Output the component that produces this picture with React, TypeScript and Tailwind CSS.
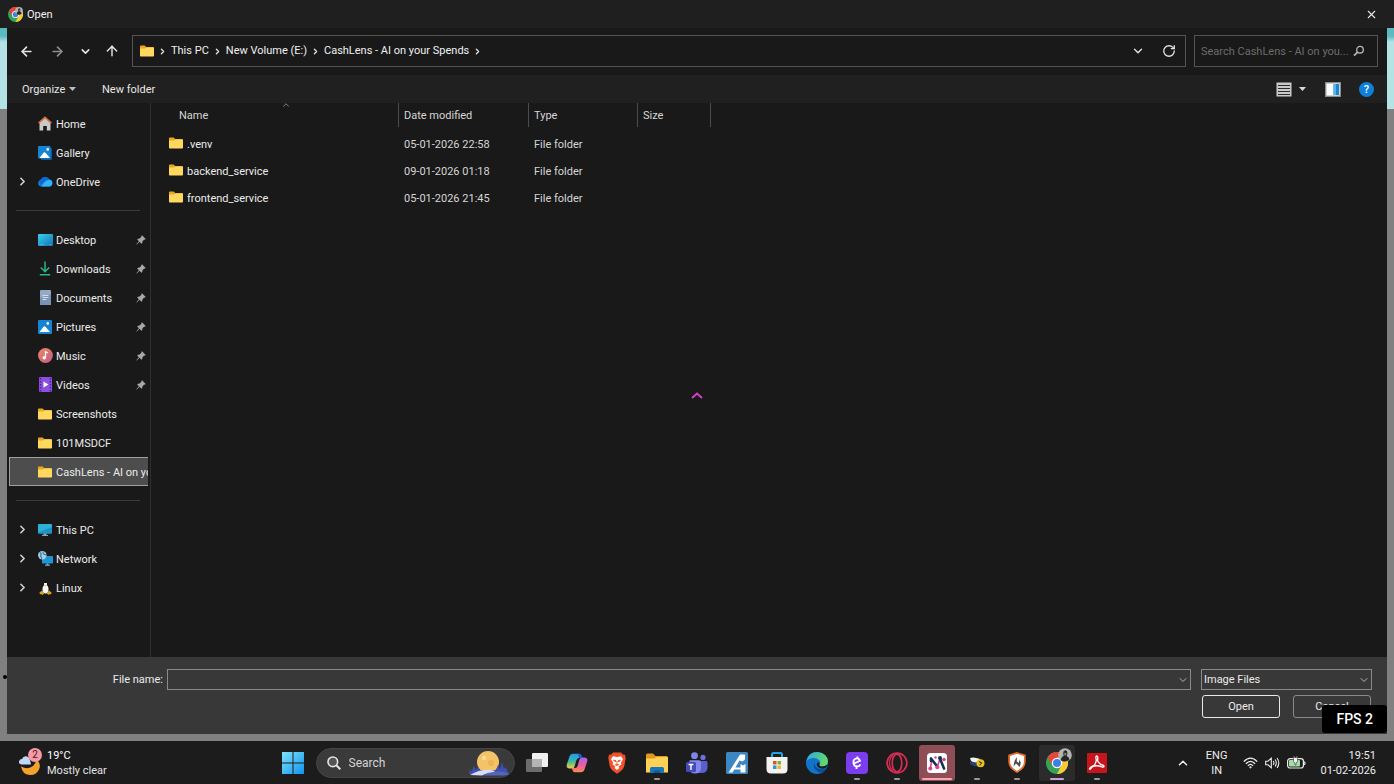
import type { ReactNode } from 'react';
import clsx from 'clsx';
import { ArrowLeft, ArrowRight, ArrowUp, ChevronDown, ChevronRight, ChevronUp, RotateCw, X } from 'lucide-react';

function FolderIcon() {
  return (
    <svg width="14" height="12" viewBox="0 0 14 12">
      <path d="M0 1.2Q0 .5.8.5H4.600L6.200 2H13q1 0 1 1V5H0Z" fill="#e9a820" />
      <path d="M0 3.600H5L6.600 2.600H13.200q.8 0 .8.8V10.700q0 .8-.8.8H.8Q0 11.500 0 10.700Z" fill="#ffd95f" />
    </svg>
  );
}

function HomeIcon() {
  return (
    <svg width="14" height="15" viewBox="0 0 14 15">
      <path d="M1.500 6 7 1.500 12.500 6V14.500H8.800V10H5.200V14.500H1.500Z" fill="#c9c9c9" />
      <path d="M.6 7.200 7 1.400 13.400 7.200" fill="none" stroke="#d8703c" strokeWidth="1.700" />
    </svg>
  );
}

function PictureIcon({ stacked = false }: { stacked?: boolean }) {
  return (
    <svg width="14" height="14" viewBox="0 0 14 14">
      {stacked && <path d="M2.500 2H13q1 0 1 1V13q0 1-1 1H3Z" fill="#0c5a9c" />}
      <rect width={stacked ? 12.5 : 14} height={stacked ? 12.5 : 14} rx="1" fill="#1684d4" />
      <path d="M1.500 12 5.500 6.800q1-1.200 2 0L12 12Z" fill="#fff" />
      <circle cx="9.800" cy="3.400" r="1.300" fill="#fff" />
    </svg>
  );
}

function OneDriveIcon() {
  return (
    <svg width="15" height="11" viewBox="0 0 15 11">
      <path d="M3.500 10.500A3.500 3.500 0 0 1 2.600 3.700 5 5 0 0 1 11.500 3.600 3.500 3.500 0 0 1 11.700 10.500Z" fill="#1485e8" />
      <path d="M2.600 3.700A5 5 0 0 1 11.500 3.600Q8 4 3 9.500 0 7 2.600 3.700Z" fill="#0a6cd0" />
      <path d="M3.500 10.500Q7 4 11.500 3.700A3.500 3.500 0 0 1 11.700 10.500Z" fill="#33b3f5" />
    </svg>
  );
}

function DesktopIcon() {
  return (
    <svg width="15" height="12" viewBox="0 0 15 12">
      <defs>
        <linearGradient id="desk" x1="0" y1="0" x2="1" y2="1">
          <stop stopColor="#3bd0e8" />
          <stop offset="1" stopColor="#0d74b8" />
        </linearGradient>
      </defs>
      <rect width="15" height="12" rx="1" fill="url(#desk)" />
      <path d="M2 10.500H6M11.500 10.500H13.500" stroke="#5cc4e0" strokeWidth=".6" />
    </svg>
  );
}

function DownloadIcon() {
  return (
    <svg width="12" height="15" viewBox="0 0 12 15" fill="none" stroke="#2bb58c" strokeWidth="1.500">
      <path d="M6 .5V10.500M1.800 6.500 6 10.700 10.200 6.500M.8 13.800H11.200" />
    </svg>
  );
}

function DocumentIcon() {
  return (
    <svg width="11" height="15" viewBox="0 0 11 15">
      <rect width="11" height="15" rx="1" fill="#93a9c4" />
      <path d="M0 8 11 4V15H0Z" fill="#7b93b2" />
      <path d="M2.500 5.500H8.500M2.500 7.500H8.500M2.500 9.500H6.500" stroke="#d3deeb" />
    </svg>
  );
}

function MusicIcon() {
  return (
    <svg width="15" height="15" viewBox="0 0 15 15">
      <defs>
        <linearGradient id="music" x1="0" y1="0" x2="1" y2="1">
          <stop stopColor="#f08a5c" />
          <stop offset="1" stopColor="#c05a8e" />
        </linearGradient>
      </defs>
      <circle cx="7.500" cy="7.500" r="7.400" fill="url(#music)" />
      <circle cx="6.300" cy="9.800" r="1.700" fill="#fff" />
      <path d="M7.500 9.800V3.600L10 5" fill="none" stroke="#fff" strokeWidth="1.200" />
    </svg>
  );
}

function VideoIcon() {
  return (
    <svg width="13" height="15" viewBox="0 0 13 15">
      <rect width="13" height="15" rx="1" fill="#8b4fe0" />
      <path d="M1.600 1V15M11.400 1V15" stroke="#4b2296" strokeWidth="1.400" strokeDasharray="1.500 1.500" />
      <path d="M4.500 4.500 9.500 7.500 4.500 10.500Z" fill="#fff" />
    </svg>
  );
}

function PcIcon() {
  return (
    <svg width="14" height="12" viewBox="0 0 14 12">
      <rect width="14" height="9.500" rx="1" fill="#2fb0d6" />
      <path d="M0 8.500 14 3V8.500q0 1-1 1H1Q0 9.500 0 8.500Z" fill="#1d92c4" />
      <path d="M5.500 9.500H8.500V11H10V12H4V11H5.500Z" fill="#8aa5b5" />
    </svg>
  );
}

function NetworkIcon() {
  return (
    <svg width="15" height="15" viewBox="0 0 15 15">
      <rect x="4" y="5" width="11" height="7.500" rx=".8" fill="#1f95d4" />
      <path d="M8.500 12.500H10.500V13.800H12V14.700H7V13.800H8.500Z" fill="#6ab5d6" />
      <circle cx="4.300" cy="4.300" r="4.200" fill="#a8cfe6" />
      <path d="M2 1.500Q4 3 2.500 5 4 6 3.500 8M5 .6Q4.500 3 8 4" fill="none" stroke="#3c7ca8" strokeWidth="1.200" />
    </svg>
  );
}

function LinuxIcon() {
  return (
    <svg width="13" height="14" viewBox="0 0 13 14">
      <path d="M6.500.5Q9 .5 8.800 3.500 11.500 7.500 11 12H2Q1.500 7.500 4.200 3.500 4 .5 6.500.5Z" fill="#151515" />
      <ellipse cx="6.500" cy="8.200" rx="3" ry="4.300" fill="#f4f4f4" />
      <path d="M5 2H8V4.500L6.500 5.500 5 4.500Z" fill="#eee" />
      <path d="M5.300 4H7.700L6.500 5.300Z" fill="#e8b423" />
      <path d="M.5 11.500 3 9.600 5.300 12.600 3.800 13.800.8 12.900ZM12.500 11.500 10 9.600 7.700 12.600 9.200 13.800 12.200 12.900Z" fill="#d9a51f" />
    </svg>
  );
}

function PinIcon() {
  return (
    <svg width="10" height="10" viewBox="0 0 10 10">
      <path d="M6 .3 9.700 4 8.900 4.700 8.200 4.600 6.400 6.400 6.300 8 5.400 8.700 3.500 6.800.8 9.500.3 9.200 2.900 6.300 1.200 4.600 2 3.700 3.600 3.600 5.400 1.800 5.300 1Z" fill="#a4a9ae" />
    </svg>
  );
}

function ChromeIcon({ size, badgeClass }: { size: number; badgeClass: string }) {
  return (
    <span className="relative block">
      <svg width={size} height={size} viewBox="0 0 24 24">
        <circle cx="12" cy="12" r="12" fill="#34a354" />
        <path d="M12 12 1.600 6A12 12 0 0 1 22.400 6L12 6.500Z" fill="#e6473a" />
        <path d="M22.400 6A12 12 0 0 1 12 24L16.800 14.700 12 6.500V6Z" fill="#fbc934" />
        <path d="M1.600 6 7.200 14.700 12 12V6Z" fill="#e6473a" />
        <circle cx="12" cy="12" r="5.700" fill="#fff" />
        <circle cx="12" cy="12" r="4.400" fill="#3f7fe8" />
      </svg>
      <svg className={clsx('absolute', badgeClass)} viewBox="0 0 16 16">
        <circle cx="8" cy="8" r="7.800" fill="#b4b4ae" />
        <path d="M3 14Q4 9.500 6.500 9 4.800 3 8.500 2.500 12 3 10 9 13 10 13 13.500 8 17 3 14Z" fill="#262626" />
        <path d="M7.200 5.500H9.500V8.500H7.200Z" fill="#8c8278" />
      </svg>
    </span>
  );
}

type NavItem = { label: string; icon: ReactNode; pinned?: boolean; expandable?: boolean; selected?: boolean };

const NAV_GROUPS: NavItem[][] = [
  [
    { label: 'Home', icon: <HomeIcon /> },
    { label: 'Gallery', icon: <PictureIcon stacked /> },
    { label: 'OneDrive', icon: <OneDriveIcon />, expandable: true },
  ],
  [
    { label: 'Desktop', icon: <DesktopIcon />, pinned: true },
    { label: 'Downloads', icon: <DownloadIcon />, pinned: true },
    { label: 'Documents', icon: <DocumentIcon />, pinned: true },
    { label: 'Pictures', icon: <PictureIcon />, pinned: true },
    { label: 'Music', icon: <MusicIcon />, pinned: true },
    { label: 'Videos', icon: <VideoIcon />, pinned: true },
    { label: 'Screenshots', icon: <FolderIcon /> },
    { label: '101MSDCF', icon: <FolderIcon /> },
    { label: 'CashLens - AI on your Spends', icon: <FolderIcon />, selected: true },
  ],
  [
    { label: 'This PC', icon: <PcIcon />, expandable: true },
    { label: 'Network', icon: <NetworkIcon />, expandable: true },
    { label: 'Linux', icon: <LinuxIcon />, expandable: true },
  ],
];

const CRUMBS = ['This PC', 'New Volume (E:)', 'CashLens - AI on your Spends'];

const FILES = [
  { name: '.venv', modified: '05-01-2026 22:58', type: 'File folder' },
  { name: 'backend_service', modified: '09-01-2026 01:18', type: 'File folder' },
  { name: 'frontend_service', modified: '05-01-2026 21:45', type: 'File folder' },
];

function TitleBar() {
  return (
    <header className="flex h-7 items-center bg-[#1f1f1f] pr-4 pl-2">
      <ChromeIcon size={15} badgeClass="top-0 right-0 size-2" />
      <h1 className="ml-1 flex-1 pt-[2px] text-[11px] text-[#f0f0f0]">Open</h1>
      <button aria-label="Close" className="text-[#e8e8e8]">
        <X size={13} strokeWidth={2} />
      </button>
    </header>
  );
}

function AddressBar() {
  return (
    <div className="flex h-[47px] items-center bg-[#191919] pr-[9px] pb-px pl-3 text-[#e4e4e4]">
      <div className="flex w-[113px] items-center">
        <button aria-label="Back"><ArrowLeft size={15} strokeWidth={2.6} /></button>
        <button aria-label="Forward" className="ml-4 text-[#8d8d8d]"><ArrowRight size={15} strokeWidth={2.6} /></button>
        <button aria-label="Recent locations" className="ml-[14px]"><ChevronDown size={13} strokeWidth={3} /></button>
        <button aria-label="Up" className="ml-3"><ArrowUp size={16} strokeWidth={2.2} /></button>
      </div>
      <nav aria-label="Address" className="flex h-8 flex-1 items-center border border-[#535353] pr-[9px] pl-[7px]">
        <FolderIcon />
        <ol className="flex flex-1 items-center">
          <li className="pr-px pl-1"><ChevronRight size={9} strokeWidth={3.5} /></li>
          {CRUMBS.map((crumb) => (
            <li key={crumb} className="flex items-center">
              <a href="#" className="px-[3px] pt-px text-[11px] text-[#f0f0f0]">{crumb}</a>
              <ChevronRight size={9} strokeWidth={3.5} className="mx-px" />
            </li>
          ))}
        </ol>
        <button aria-label="Previous locations"><ChevronDown size={14} strokeWidth={2.4} /></button>
        <button aria-label="Refresh" className="ml-[17px]"><RotateCw size={14} strokeWidth={2.2} /></button>
      </nav>
      <label className="ml-2 flex h-8 w-[184px] items-center border border-[#535353] pr-3 pl-[6px]">
        <input
          type="text"
          aria-label="Search folder"
          placeholder="Search CashLens - AI on you..."
          className="min-w-0 flex-1 pt-[2px] text-[11px] outline-none placeholder:text-[#6c6c6c]"
        />
        <svg width="12" height="12" viewBox="0 0 12 12" fill="none" stroke="#b8b8b8" strokeWidth="1.3">
          <circle cx="7" cy="4.700" r="3.300" />
          <path d="M4.600 7.100 1 10.700" strokeWidth="1.700" />
        </svg>
      </label>
    </div>
  );
}

function CommandBar() {
  return (
    <div className="flex h-7 items-center bg-[#202020] pr-[13px] pl-[15px] text-[11px] text-[#e6e6e6]">
      <button className="flex w-[54px] items-center justify-between">
        <span className="pt-[2px]">Organize</span>
        <svg width="7" height="4" viewBox="0 0 7 4"><path d="M0 0H7L3.500 4Z" fill="#bdbdbd" /></svg>
      </button>
      <button className="ml-[26px] flex-1 pt-[2px] text-left">New folder</button>
      <button aria-label="Change view">
        <svg width="16" height="15" viewBox="0 0 16 15">
          <rect x=".5" y=".5" width="15" height="14" fill="#c9c9c9" />
          <path d="M2 3.500H14M2 6.500H14M2 9.500H14M2 12.500H14" stroke="#2b2b2b" />
        </svg>
      </button>
      <button aria-label="View options" className="ml-[7px]">
        <svg width="7" height="4" viewBox="0 0 7 4"><path d="M0 0H7L3.500 4Z" fill="#d8d8d8" /></svg>
      </button>
      <button aria-label="Preview pane" className="ml-[19px]">
        <svg width="16" height="15" viewBox="0 0 16 15">
          <rect x=".7" y=".7" width="14.600" height="13.600" fill="#fff" stroke="#8d8d8d" strokeWidth="1.400" />
          <path d="M8.500 2H14V13H8.500Z" fill="#1a86d8" />
          <path d="M8.500 2H11V13H8.500Z" fill="#55b4f0" />
        </svg>
      </button>
      <button aria-label="Help" className="ml-[18px] grid size-[15px] place-items-center rounded-full bg-[#0f7fdc] text-[11px] leading-none font-medium text-white">
        ?
      </button>
    </div>
  );
}

function Sidebar() {
  return (
    <nav aria-label="Folders" className="w-[144px] shrink-0 border-r border-[#303030] px-[2px] pt-[6px] text-[11px] text-[#ececec]">
      {NAV_GROUPS.map((group, i) => (
        <div key={i}>
          {i > 0 && (
            <div className="flex h-[29px] items-center pr-2 pl-[7px]">
              <hr className="flex-1 border-[#3a3a3a]" />
            </div>
          )}
          <ul>
            {group.map((item) => (
              <li key={item.label}>
                <a
                  href="#"
                  className={clsx(
                    'flex h-[29px] items-center overflow-hidden border border-r-0',
                    item.selected ? 'border-[#a0a0a0] bg-[#4d4d4d]' : 'border-transparent',
                  )}
                >
                  <span className="grid w-[27px] shrink-0 place-items-center pr-[2px]">
                    {item.expandable && <ChevronRight size={13} strokeWidth={3} className="text-[#d0d0d0]" />}
                  </span>
                  <span className="grid w-4 shrink-0 place-items-center">{item.icon}</span>
                  <span className="ml-[3px] flex-1 pt-[3px] whitespace-nowrap">{item.label}</span>
                  {item.pinned && <span className="mr-[2px]"><PinIcon /></span>}
                </a>
              </li>
            ))}
          </ul>
        </div>
      ))}
    </nav>
  );
}

function FileTable() {
  return (
    <main className="min-w-0 flex-1">
      <table className="w-[560px] table-fixed border-collapse text-left text-[11px] text-[#d6d6d6]">
        <colgroup>
          <col className="w-[248px]" />
          <col className="w-[130px]" />
          <col className="w-[109px]" />
          <col className="w-[73px]" />
        </colgroup>
        <thead>
          <tr>
            <th aria-sort="ascending" className="relative p-0 pb-1 font-normal">
              <div className="flex h-6 items-center border-r border-[#4c4c4c] pt-[2px] pl-7">Name</div>
              <ChevronUp size={10} strokeWidth={1.8} className="absolute -top-[3px] left-[130px] text-[#a8a8a8]" />
            </th>
            {['Date modified', 'Type', 'Size'].map((title) => (
              <th key={title} className="p-0 pb-1 font-normal">
                <div className="flex h-6 items-center border-r border-[#4c4c4c] pt-[2px] pl-[5px]">{title}</div>
              </th>
            ))}
          </tr>
        </thead>
        <tbody>
          {FILES.map((file) => (
            <tr key={file.name} className="h-[27px]">
              <td className="p-0 pt-[2px] pl-[18px]">
                <span className="flex items-start gap-1 text-[#ececec]">
                  <FolderIcon />
                  {file.name}
                </span>
              </td>
              <td className="p-0 pt-[2px] pl-[5px]">{file.modified}</td>
              <td className="p-0 pt-[2px] pl-[5px]">{file.type}</td>
              <td className="p-0" />
            </tr>
          ))}
        </tbody>
      </table>
    </main>
  );
}

function DialogFooter() {
  return (
    <footer className="flex h-[77px] items-start bg-[#383838] pt-3 pr-[15px] text-[11px] text-[#ececec]">
      <label htmlFor="file-name" className="w-[156px] text-right leading-[22px]">File name:</label>
      <div className="relative ml-1 flex-1">
        <input id="file-name" type="text" className="block h-[21px] w-full border border-[#8a8a8a] bg-[#383838] pr-5 pl-1 outline-none" />
        <ChevronDown size={12} strokeWidth={2} className="absolute top-[5px] right-[2px] text-[#b4b4b4]" />
      </div>
      <div className="ml-[10px] w-[171px]">
        <div className="relative">
          <select aria-label="File type" className="block h-[21px] w-full appearance-none border border-[#8a8a8a] bg-[#383838] pt-px pl-[2px] outline-none">
            <option>Image Files</option>
          </select>
          <ChevronDown size={12} strokeWidth={2} className="pointer-events-none absolute top-[5px] right-[2px] text-[#b4b4b4]" />
        </div>
        <div className="mt-[5px] flex justify-between px-px">
          <button className="h-[23px] w-[78px] rounded-[3px] border border-[#e8e8e8] pt-[2px]">Open</button>
          <button className="h-[23px] w-[78px] rounded-[3px] border border-[#8a8a8a] pt-[2px]">Cancel</button>
        </div>
      </div>
    </footer>
  );
}

type TaskApp = { name: string; icon: ReactNode; state?: 'open' | 'alert' | 'active' };

const TASK_APPS: TaskApp[] = [
  {
    name: 'Task View',
    icon: (
      <svg width="22" height="20" viewBox="0 0 22 20">
        <rect y="6" width="16" height="13" rx="1" fill="#6c6c6c" />
        <rect x="6" width="16" height="14" rx="1" fill="#f0f0f0" />
        <path d="M6 6H16V14H6Z" fill="#b4b4b4" />
      </svg>
    ),
  },
  {
    name: 'Copilot',
    icon: (
      <svg width="22" height="20" viewBox="0 0 22 20">
        <defs>
          <linearGradient id="cpl" x1="0" y1="0" x2="0" y2="1">
            <stop stopColor="#2496f0" />
            <stop offset=".5" stopColor="#37b9a4" />
            <stop offset="1" stopColor="#f2cf3c" />
          </linearGradient>
          <linearGradient id="cpr" x1="0" y1="0" x2="0" y2="1">
            <stop stopColor="#a767ee" />
            <stop offset=".55" stopColor="#ee5d9b" />
            <stop offset="1" stopColor="#fa8c4e" />
          </linearGradient>
        </defs>
        <path d="M7 .8H13Q15 .8 15.600 3L16.200 5H13Q11 5 10.300 7.500L8.700 13Q8 15.500 6 15.500H3.500Q0 15.500 .8 11.500L3.300 4Q4.300.8 7 .8Z" fill="url(#cpl)" />
        <path d="M15 19.200H9Q7 19.200 6.400 17L5.800 15H9Q11 15 11.700 12.500L13.300 7Q14 4.500 16 4.500H18.500Q22 4.500 21.200 8.500L18.700 16Q17.700 19.200 15 19.200Z" fill="url(#cpr)" />
        <path d="M12 .8Q15 .8 15.600 3L16.200 5H13Z" fill="#2356cf" />
      </svg>
    ),
  },
  {
    name: 'Brave',
    icon: (
      <svg width="18" height="22" viewBox="0 0 18 22">
        <path d="M5 .5H13L14.800 2.500 17 2.800 17.700 6 16.300 14Q15.500 18 9 21.700 2.500 18 1.700 14L.3 6 1 2.800 3.200 2.500Z" fill="#f0502a" />
        <path d="M5 4.200 9 4.900 13 4.200 15 7.200 13 10.500 13.300 12.500 10.500 14.600 11.500 16 9 18 6.500 16 7.500 14.600 4.700 12.500 5 10.500 3 7.200Z" fill="#fff" />
        <path d="M5.500 8 8 8.800 7.500 10ZM12.500 8 10 8.800 10.500 10ZM9 9V13M6.800 12.300 9 13.500 11.200 12.300" fill="#f0502a" stroke="#f0502a" strokeWidth=".9" />
      </svg>
    ),
  },
  {
    name: 'File Explorer',
    state: 'open',
    icon: (
      <svg width="22" height="20" viewBox="0 0 22 20">
        <path d="M0 2Q0 .5 1.500.5H7L9.500 3H20.500Q22 3 22 4.500V8H0Z" fill="#dd9b1b" />
        <path d="M0 5.500H8.500L10.500 4H21Q22 4 22 5V19.500H0Z" fill="#ffd257" />
        <path d="M4 20V15.500Q4 14 5.500 14H16.500Q18 14 18 15.500V20Z" fill="#1777bd" />
        <path d="M8 17.500H14V20H8Z" fill="#0f5a94" />
      </svg>
    ),
  },
  {
    name: 'Teams',
    icon: (
      <svg width="22" height="22" viewBox="0 0 22 22">
        <circle cx="8.500" cy="3.700" r="3.400" fill="#7f86e8" />
        <circle cx="17" cy="5.400" r="2.600" fill="#6d70dc" />
        <path d="M12 9H20Q21.500 9 21.500 10.500V16Q21 21 16 21H11Z" fill="#5b5fcb" />
        <path d="M3.500 8.300H13Q15 8.300 15 10.300V16Q14.500 21.500 9 21.500 3.500 21.500 3.500 16Z" fill="#8388ef" />
        <rect y="10" width="10" height="10" rx="1.500" fill="#454ab5" />
        <path d="M2.600 12.500H7.400M5 12.500V18" stroke="#fff" strokeWidth="1.400" />
      </svg>
    ),
  },
  {
    name: 'Drafting',
    icon: (
      <svg width="22" height="22" viewBox="0 0 22 22">
        <rect width="22" height="22" rx="1.500" fill="#3c86c4" />
        <path d="M2.500 20.500 14 2.500H19V7.500L16.500 9.500 13.500 8.500 6.500 20.500ZM14.500 12 17 13.500 19.500 12V20.500H14.500ZM8.500 15.500H14.500V17.500H7.500Z" fill="#fff" />
      </svg>
    ),
  },
  {
    name: 'Microsoft Store',
    icon: (
      <svg width="22" height="22" viewBox="0 0 22 22">
        <path d="M6 6V2.500Q6 1 7.500 1H14.500Q16 1 16 2.500V6" fill="none" stroke="#22a4e4" strokeWidth="2" />
        <path d="M.5 5H21.500V17Q21.500 21.500 17 21.500H5Q.5 21.500.5 17Z" fill="#f2f2f2" />
        <path d="M7 9H10.500V12.500H7Z" fill="#e8502c" />
        <path d="M11.500 9H15V12.500H11.500Z" fill="#80b32a" />
        <path d="M7 13.500H10.500V17H7Z" fill="#1c9fe0" />
        <path d="M11.500 13.500H15V17H11.500Z" fill="#f6b51e" />
      </svg>
    ),
  },
  {
    name: 'Edge',
    icon: (
      <svg width="22" height="22" viewBox="0 0 22 22">
        <defs>
          <linearGradient id="edge" x1="0" y1="0" x2="1" y2=".3">
            <stop stopColor="#2ca6e4" />
            <stop offset="1" stopColor="#62d96b" />
          </linearGradient>
        </defs>
        <circle cx="11" cy="11" r="11" fill="#1273c9" />
        <path d="M.3 9.500Q2 0 11.500 0 21.500 1 22 9.500 21.500 14 16.500 14.300 13 14.500 13.300 12.700 15 11 13.700 8.700 11.500 5.500 7 6 2 6.800.3 9.500Z" fill="url(#edge)" />
        <path d="M8 11Q6.500 19 15.500 20.800 20.500 18.500 20.300 16.500 15.500 18.500 12 16.500 8.500 14.500 8 11Z" fill="#0c4a94" />
        <path d="M13.300 12.700Q13 14.700 17 14.500 20 14 21.800 12.500 21 15.500 19 16.300 14 17.500 11.500 14.500 10.500 13 11 11.500 12 10 13.700 11Z" fill="#1c1c1c" />
      </svg>
    ),
  },
  {
    name: 'Editor',
    state: 'open',
    icon: (
      <svg width="22" height="22" viewBox="0 0 22 22">
        <rect width="22" height="22" rx="4" fill="#7a3df0" />
        <path d="M8 11.500 14 8.800Q13 5.800 10 6.500 7 7.500 7.500 11 8 14.500 11 14.500 13.500 14.500 14.500 12.500M11.500 4.500V7M10.500 14V17" fill="none" stroke="#fff" strokeWidth="1.800" />
      </svg>
    ),
  },
  {
    name: 'Opera GX',
    state: 'open',
    icon: (
      <svg width="22" height="22" viewBox="0 0 22 22" fill="none" stroke="#d92c55">
        <circle cx="11" cy="11" r="9.900" strokeWidth="1.700" />
        <ellipse cx="11" cy="11" rx="4.800" ry="8.800" strokeWidth="1.700" />
        <path d="M7 3Q3.500 6 3.500 11T7 19" strokeWidth="1.200" />
      </svg>
    ),
  },
  {
    name: 'Messages',
    state: 'alert',
    icon: (
      <svg width="20" height="20" viewBox="0 0 20 20" strokeLinecap="round">
        <rect width="20" height="20" rx="3.500" fill="#fff" />
        <path d="M3.300 15.500 4.500 9M10.300 14 13 5.500" stroke="#d6458d" strokeWidth="1.600" />
        <path d="M4 5.500 9.500 12.500M13 5.500 17 15.500M4 5.500V8" fill="none" stroke="#16334f" strokeWidth="2.600" />
        <circle cx="3.300" cy="15.500" r="2" fill="#d6458d" />
        <circle cx="10.300" cy="14.300" r="2" fill="#d6458d" />
        <circle cx="8.500" cy="4.500" r="1.200" fill="#d6458d" />
        <circle cx="17" cy="6.500" r="1.800" fill="#d6458d" />
        <circle cx="13" cy="5" r="2" fill="#16334f" />
      </svg>
    ),
  },
  {
    name: 'Bee',
    state: 'open',
    icon: (
      <svg width="16" height="11" viewBox="0 0 16 11">
        <path d="M1 1Q5-.5 11 2V5Q6 7 2 4Z" fill="#f2f2f2" />
        <path d="M1 4Q6 7 10 4.500V9Q5 10.500 1 7Z" fill="#24406e" />
        <circle cx="11.500" cy="6.300" r="4" fill="#eac41f" />
        <path d="M10 4.500 12.500 6 10.500 8.500" fill="none" stroke="#574500" strokeWidth="1.200" />
      </svg>
    ),
  },
  {
    name: 'Firewall',
    state: 'open',
    icon: (
      <svg width="18" height="21" viewBox="0 0 18 21">
        <path d="M9 1 16.800 3.500V10Q16.500 16 9 20 1.500 16 1.200 10V3.500Z" fill="#fff" stroke="#e8702d" strokeWidth="1.800" />
        <path d="M5.500 14.500 6.500 9 8.800 5V9.500L11 11V7.500L12.800 10.500 11.800 15 8 11.500Z" fill="#4c4c4c" />
      </svg>
    ),
  },
  { name: 'Chrome', state: 'active', icon: <ChromeIcon size={22} badgeClass="-top-1 -right-1 size-[14px]" /> },
  {
    name: 'Acrobat',
    state: 'open',
    icon: (
      <svg width="20" height="20" viewBox="0 0 20 20">
        <rect width="20" height="20" rx="1" fill="#c8141c" />
        <path d="M9.500 3Q11.500 3 10.500 7.500 12 11.500 16.500 12.500 18 14.500 15 14 9.500 11.500 5 14 2.500 17.500 2.500 15.500 3.500 13.500 7.500 12 10 8 9 5.500 8.500 3.500 9.500 3Z" fill="none" stroke="#fff" strokeWidth="1.300" />
      </svg>
    ),
  },
];

function WeatherWidget() {
  return (
    <button className="flex items-center gap-1 text-left text-[11px] leading-[15px] text-[#e4e4e4]">
      <span className="relative block">
        <svg width="26" height="28" viewBox="0 0 26 28">
          <path d="M4 17.500Q11 21 16 17 19 14 19.500 10 24.500 15 22 20.500 19 26.500 12.500 26 5.500 25.500 4 17.500Z" fill="#f3a32c" />
          <path d="M4.500 15.500Q1.500 15 2 12.300 2.700 10 5 10 6.500 6.500 10 7.500 13 8.500 14 15.500Z" fill="#c2d8f8" />
        </svg>
        <span className="absolute -top-px right-px grid size-[14px] place-items-center rounded-full bg-[#f799a6] text-[10px] leading-none text-[#40161c]">2</span>
      </span>
      <span>
        <span className="block text-white">19°C</span>
        <span className="block">Mostly clear</span>
      </span>
    </button>
  );
}

function TaskSearch() {
  return (
    <label className="mx-[3px] flex h-[30px] w-[199px] items-center rounded-full border border-[#454545] bg-[#3a3a3a] pr-1 pl-[10px]">
      <svg width="14" height="14" viewBox="0 0 14 14" fill="none" stroke="#e4e4e4" strokeWidth="1.600">
        <circle cx="5.800" cy="5.800" r="4.800" fill="#555" />
        <path d="M9.300 9.300 13.300 13.300" strokeWidth="2" />
      </svg>
      <input
        type="text"
        aria-label="Search"
        placeholder="Search"
        className="ml-2 min-w-0 flex-1 text-[12px] outline-none placeholder:text-[#d4d4d4]"
      />
      <svg width="42" height="26" viewBox="0 0 42 26">
        <circle cx="20" cy="12" r="11" fill="#f4c369" />
        <circle cx="16" cy="8" r="2.200" fill="#fbdc94" />
        <circle cx="23" cy="13" r="3" fill="#eeb353" />
        <path d="M1 24 2 19 3.500 22 6 16 8 20 10 17 12 20H28L30 15 32 19 34 12 36 19 37.500 17 41 24Z" fill="#3c51b4" />
        <path d="M2 25Q12 19 23 20 30 21 24 23 17 24 14 25.500Z" fill="#d9dcf4" />
        <path d="M14 25.500Q18 22.500 29 21.500 37 21 41 24.500L36 25.500Z" fill="#5566b8" />
      </svg>
    </label>
  );
}

function SystemTray() {
  return (
    <div className="flex flex-1 basis-0 items-center justify-end pr-[18px] text-[11px] leading-[15px] text-[#ececec]">
      <button aria-label="Show hidden icons"><ChevronUp size={14} strokeWidth={2.6} /></button>
      <button className="ml-4 text-center">
        <span className="block">ENG</span>
        <span className="block">IN</span>
      </button>
      <button aria-label="Network, volume and battery" className="ml-4 flex items-center gap-[7px]">
        <svg width="15" height="12" viewBox="0 0 15 12" fill="none" stroke="#ececec" strokeWidth="1.300">
          <path d="M.8 4.600Q7.500-2.500 14.200 4.600M2.900 6.800Q7.500 1.900 12.100 6.800M4.900 8.900Q7.500 6 10.100 8.900" />
          <circle cx="7.500" cy="10.300" r="1.100" fill="#ececec" stroke="none" />
        </svg>
        <svg width="15" height="12" viewBox="0 0 15 12" fill="none" stroke="#ececec" strokeWidth="1.100">
          <path d="M.7 4.200H3L6.300 1.200V10.800L3 7.800H.7Z" />
          <path d="M8.300 4Q9.500 6 8.300 8M10.200 2.500Q12.400 6 10.200 9.500M12.100 1Q15.500 6 12.100 11" />
        </svg>
        <svg width="19" height="13" viewBox="0 0 19 13">
          <rect x=".6" y="2.600" width="15.800" height="9.400" rx="2.500" fill="none" stroke="#ececec" strokeWidth="1.200" />
          <rect x="2" y="4" width="11" height="6.600" rx="1" fill="#a2dfa8" />
          <path d="M17.400 5.500Q18.500 7.300 17.400 9" fill="none" stroke="#ececec" strokeWidth="1.200" />
          <path d="M6.500 1.500V0H7.500V1.500H9.500V0H10.500V5Q10.500 6.500 9 6.800V9H8V6.800Q6.500 6.500 6.500 5Z" fill="#f4f4f4" stroke="#1c1c1c" strokeWidth=".5" />
        </svg>
      </button>
      <button className="ml-[14px] text-right">
        <span className="block">19:51</span>
        <span className="block">01-02-2026</span>
      </button>
    </div>
  );
}

function Taskbar() {
  return (
    <div className="flex h-[43px] items-center bg-[#1c1c1c]">
      <div className="flex flex-1 basis-0 pl-[17px]">
        <WeatherWidget />
      </div>
      <div className="mr-1 flex items-center">
        <button aria-label="Start" className="grid size-10 place-items-center">
          <svg width="22" height="22" viewBox="0 0 22 22">
            <defs>
              <linearGradient id="win" x1="0" y1="0" x2="1" y2="1">
                <stop stopColor="#7ce4fa" />
                <stop offset="1" stopColor="#1292ee" />
              </linearGradient>
            </defs>
            <path d="M0 0H10.500V10.500H0ZM11.500 0H22V10.500H11.500ZM0 11.500H10.500V22H0ZM11.500 11.500H22V22H11.500Z" fill="url(#win)" />
          </svg>
        </button>
        <TaskSearch />
        <div className="-ml-px flex">
          {TASK_APPS.map((app) => (
            <button
              key={app.name}
              aria-label={app.name}
              className={clsx(
                'relative mx-[2px] grid size-9 place-items-center rounded-[3px]',
                app.state === 'alert' && 'bg-[#8f4d55]',
                app.state === 'active' && 'bg-[#2b2b2b]',
              )}
            >
              {app.icon}
              {app.state && (
                <span
                  className={clsx(
                    'absolute bottom-px left-1/2 h-[2px] -translate-x-1/2 rounded-full',
                    app.state === 'open' && 'w-[6px] bg-[#9a9a9a]',
                    app.state === 'alert' && 'w-[30px] bg-[#ffa3b0]',
                    app.state === 'active' && 'w-[14px] bg-[#d09be0]',
                  )}
                />
              )}
            </button>
          ))}
        </div>
      </div>
      <SystemTray />
    </div>
  );
}

export default function App() {
  return (
    <div className="relative flex min-h-screen flex-col font-['Roboto','Noto_Sans',sans-serif]">
      <TitleBar />
      <div className="flex flex-1 flex-col bg-[linear-gradient(#5bb9c0_0px,#5bb9c0_8px,#b4e3e6_14px,#b4e3e6_81px,#808080_81px)] px-[7px] pb-[7px]">
        <div className="relative flex flex-1 flex-col bg-[#191919]">
          <AddressBar />
          <CommandBar />
          <div className="flex flex-1">
            <Sidebar />
            <FileTable />
          </div>
          <DialogFooter />
          <output className="absolute right-0 bottom-px rounded-[3px] bg-black px-[14px] text-[14px] leading-7 font-medium text-white">FPS 2</output>
          <span className="absolute bottom-[55px] -left-[4px] size-1 rounded-full bg-black" />
        </div>
      </div>
      <Taskbar />
      <svg className="absolute top-1/2 left-1/2 -translate-x-1/2" width="12" height="7" viewBox="0 0 12 7" fill="none" stroke="#d63fc8" strokeWidth="2">
        <path d="M1 6 6 1.500 11 6" />
      </svg>
    </div>
  );
}
